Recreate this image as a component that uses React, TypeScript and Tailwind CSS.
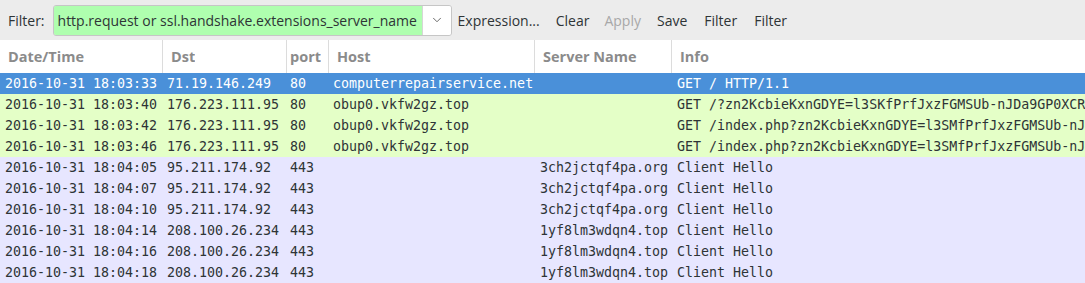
import { ChevronDown } from 'lucide-react';

type Row = {
  time: string;
  dst: string;
  port: string;
  host: string;
  server: string;
  info: string;
  kind: 'sel' | 'http' | 'tls';
};

const rows: Row[] = [
  { time: '2016-10-31 18:03:33', dst: '71.19.146.249', port: '80', host: 'computerrepairservice.net', server: '', info: 'GET / HTTP/1.1', kind: 'sel' },
  { time: '2016-10-31 18:03:40', dst: '176.223.111.95', port: '80', host: 'obup0.vkfw2gz.top', server: '', info: 'GET /?zn2KcbieKxnGDYE=l3SKfPrfJxzFGMSUb-nJDa9GP0XCR', kind: 'http' },
  { time: '2016-10-31 18:03:42', dst: '176.223.111.95', port: '80', host: 'obup0.vkfw2gz.top', server: '', info: 'GET /index.php?zn2KcbieKxnGDYE=l3SMfPrfJxzFGMSUb-nJ', kind: 'http' },
  { time: '2016-10-31 18:03:46', dst: '176.223.111.95', port: '80', host: 'obup0.vkfw2gz.top', server: '', info: 'GET /index.php?zn2KcbieKxnGDYE=l3SMfPrfJxzFGMSUb-nJ', kind: 'http' },
  { time: '2016-10-31 18:04:05', dst: '95.211.174.92', port: '443', host: '', server: '3ch2jctqf4pa.org', info: 'Client Hello', kind: 'tls' },
  { time: '2016-10-31 18:04:07', dst: '95.211.174.92', port: '443', host: '', server: '3ch2jctqf4pa.org', info: 'Client Hello', kind: 'tls' },
  { time: '2016-10-31 18:04:10', dst: '95.211.174.92', port: '443', host: '', server: '3ch2jctqf4pa.org', info: 'Client Hello', kind: 'tls' },
  { time: '2016-10-31 18:04:14', dst: '208.100.26.234', port: '443', host: '', server: '1yf8lm3wdqn4.top', info: 'Client Hello', kind: 'tls' },
  { time: '2016-10-31 18:04:16', dst: '208.100.26.234', port: '443', host: '', server: '1yf8lm3wdqn4.top', info: 'Client Hello', kind: 'tls' },
  { time: '2016-10-31 18:04:18', dst: '208.100.26.234', port: '443', host: '', server: '1yf8lm3wdqn4.top', info: 'Client Hello', kind: 'tls' },
];

const cols = 'grid grid-cols-[162px_124px_42px_206px_137px_1fr]';

const rowBg = {
  sel: 'bg-[#4a90d9] text-white',
  http: 'bg-[#e4ffc7] text-[#2e3436]',
  tls: 'bg-[#e7e6ff] text-[#2e3436]',
};

export default function App() {
  const headers = ['Date/Time', 'Dst', 'port', 'Host', 'Server Name', 'Info'];
  return (
    <div className="w-[1085px] h-[283px] overflow-hidden bg-white font-['Open_Sans',sans-serif]">
      <div className="h-[40px] bg-[#ececec] flex items-center text-[14px] text-[#2e3436]">
        <span className="ml-[8px] mr-[8px]">Filter:</span>
        <div className="flex h-[31px] w-[399px] border border-[#c6c6c6] rounded-[3px] overflow-hidden">
          <div className="flex-1 bg-[#afffaf] flex items-center pl-[4px] whitespace-nowrap overflow-hidden">
            http.request or ssl.handshake.extensions_server_name
          </div>
          <div className="w-[29px] bg-white border-l border-[#d6d6d6] flex items-center justify-center text-[#555]">
            <ChevronDown size={14} strokeWidth={1.5} />
          </div>
        </div>
        <div className="flex items-center ml-[6px]">
          <span>Expression...</span>
          <span className="ml-[16px]">Clear</span>
          <span className="ml-[15px] text-[#a8a8a8]">Apply</span>
          <span className="ml-[16px]">Save</span>
          <span className="ml-[17px]">Filter</span>
          <span className="ml-[17px]">Filter</span>
        </div>
      </div>
      <div className={`${cols} h-[33px] items-center text-[14.5px] font-bold text-[#8b8b8b]`}>
        {headers.map((h, i) => (
          <div
            key={h}
            className={`h-full flex items-center overflow-hidden whitespace-nowrap ${i > 0 ? 'border-l border-[#dcdcdc]' : ''} ${i === 2 ? 'pl-[3px] pr-[6px]' : 'pl-[8px]'}`}
          >
            <span className="overflow-hidden">{h}</span>
          </div>
        ))}
      </div>
      <div className="font-['DejaVu_Sans_Mono',monospace] text-[13.3px]">
        {rows.map((r, i) => (
          <div key={i} className={`${cols} h-[21px] items-center whitespace-nowrap ${rowBg[r.kind]}`}>
            <div className="pl-[5px] overflow-hidden">{r.time}</div>
            <div className="pl-[5px] overflow-hidden">{r.dst}</div>
            <div className="pl-[4px] overflow-hidden">{r.port}</div>
            <div className="pl-[5px] overflow-hidden">{r.host}</div>
            <div className="pl-[6px] overflow-hidden">{r.server}</div>
            <div className="pl-[6px] overflow-hidden">{r.info}</div>
          </div>
        ))}
      </div>
    </div>
  );
}
